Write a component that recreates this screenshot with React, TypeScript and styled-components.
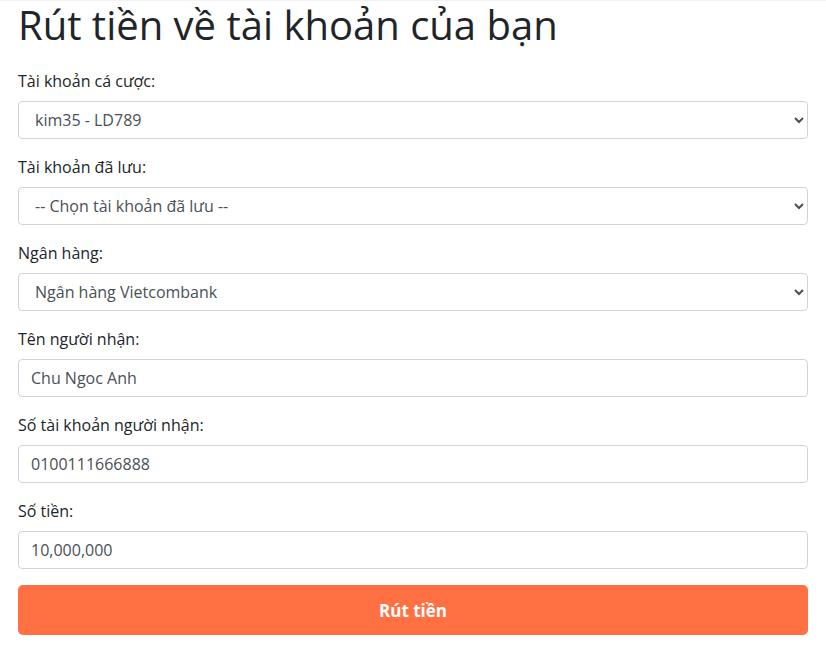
import React from "react";
import styled, { createGlobalStyle } from "styled-components";

const Global = createGlobalStyle`
  html, body { margin: 0; padding: 0; background: #fff; }
  body { font-family: "Open Sans", "Liberation Sans", sans-serif; color: #212529; }
  * { box-sizing: border-box; }
`;

const Page = styled.div`
  border-top: 1px solid #f2f2f6;
  padding: 0 18px;
`;

const Title = styled.h1`
  margin: 0 0 20px;
  font-size: 40px;
  font-weight: 400;
  line-height: 48px;
  color: #212529;
`;

const Group = styled.div`
  margin-bottom: 16px;
`;

const Label = styled.label`
  display: block;
  margin-bottom: 8px;
  font-size: 16px;
  line-height: 24px;
  color: #212529;
`;

const fieldCss = `
  display: block;
  width: 100%;
  height: 38px;
  padding: 6px 12px;
  font-family: "Open Sans", "Liberation Sans", sans-serif;
  font-size: 16px;
  line-height: 24px;
  color: #495057;
  background: #fff;
  border: 1px solid #ced4da;
  border-radius: 4px;
  outline: none;
`;

const Select = styled.select`
  ${fieldCss}
`;

const Input = styled.input`
  ${fieldCss}
`;

const Button = styled.button`
  display: block;
  width: 100%;
  height: 50px;
  border: none;
  border-radius: 5px;
  background: #ff7043;
  color: #fff;
  font-family: "Open Sans", "Liberation Sans", sans-serif;
  font-weight: 700;
  font-size: 17px;
  cursor: pointer;
`;

export default function App() {
  return (
    <>
      <Global />
      <Page>
        <Title>Rút tiền về tài khoản của bạn</Title>
        <Group>
          <Label>Tài khoản cá cược:</Label>
          <Select defaultValue="a">
            <option value="a">kim35 - LD789</option>
          </Select>
        </Group>
        <Group>
          <Label>Tài khoản đã lưu:</Label>
          <Select defaultValue="">
            <option value="">-- Chọn tài khoản đã lưu --</option>
          </Select>
        </Group>
        <Group>
          <Label>Ngân hàng:</Label>
          <Select defaultValue="vcb">
            <option value="vcb">Ngân hàng Vietcombank</option>
          </Select>
        </Group>
        <Group>
          <Label>Tên người nhận:</Label>
          <Input defaultValue="Chu Ngoc Anh" />
        </Group>
        <Group>
          <Label>Số tài khoản người nhận:</Label>
          <Input defaultValue="0100111666888" />
        </Group>
        <Group>
          <Label>Số tiền:</Label>
          <Input defaultValue="10,000,000" />
        </Group>
        <Button>Rút tiền</Button>
      </Page>
    </>
  );
}
